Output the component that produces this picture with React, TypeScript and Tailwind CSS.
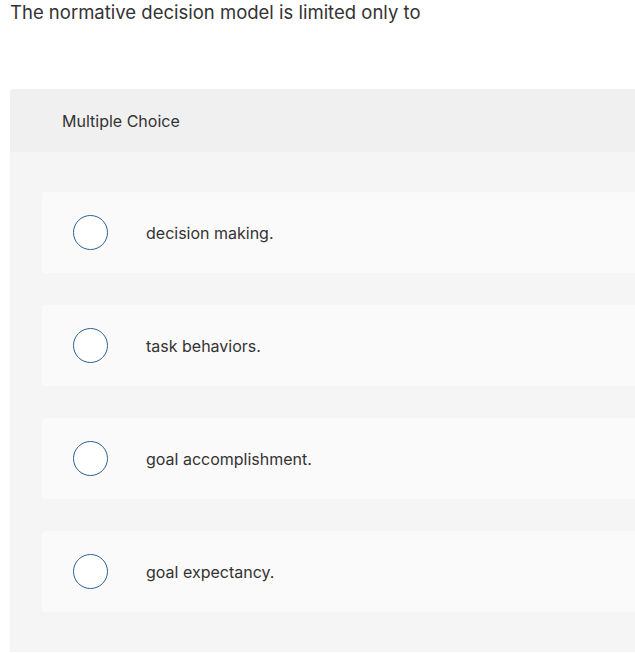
import React from "react";

const OPTIONS = ["decision making.", "task behaviors.", "goal accomplishment.", "goal expectancy."];

export default function App() {
  return (
    <div className="h-[653px] w-[635px] overflow-hidden bg-white text-[#333]" style={{ fontFamily: "Inter, 'Open Sans', sans-serif" }}>
      <h1 className="pl-[10px] pt-[1px] text-[18.5px] leading-[22px] font-normal">The normative decision model is limited only to</h1>

      <div className="ml-[10px] mt-[66px] w-[700px] overflow-hidden rounded-tl-[4px] bg-[#f5f5f5] pb-[40px]">
        <div className="flex h-[63px] items-center bg-[#f0f0f0] pl-[52px] text-[16px]">Multiple Choice</div>

        <div className="flex flex-col gap-[32px] pl-[32px] pt-[40px]">
          {OPTIONS.map((o) => (
            <div key={o} className="flex h-[81px] items-center rounded-[4px] bg-[#fafafa]">
              <span className="ml-[31px] block h-[35px] w-[35px] rounded-full border-[1.5px] border-[#2f5f8f] bg-white" />
              <span className="ml-[38px] text-[16px]">{o}</span>
            </div>
          ))}
        </div>
      </div>
    </div>
  );
}
